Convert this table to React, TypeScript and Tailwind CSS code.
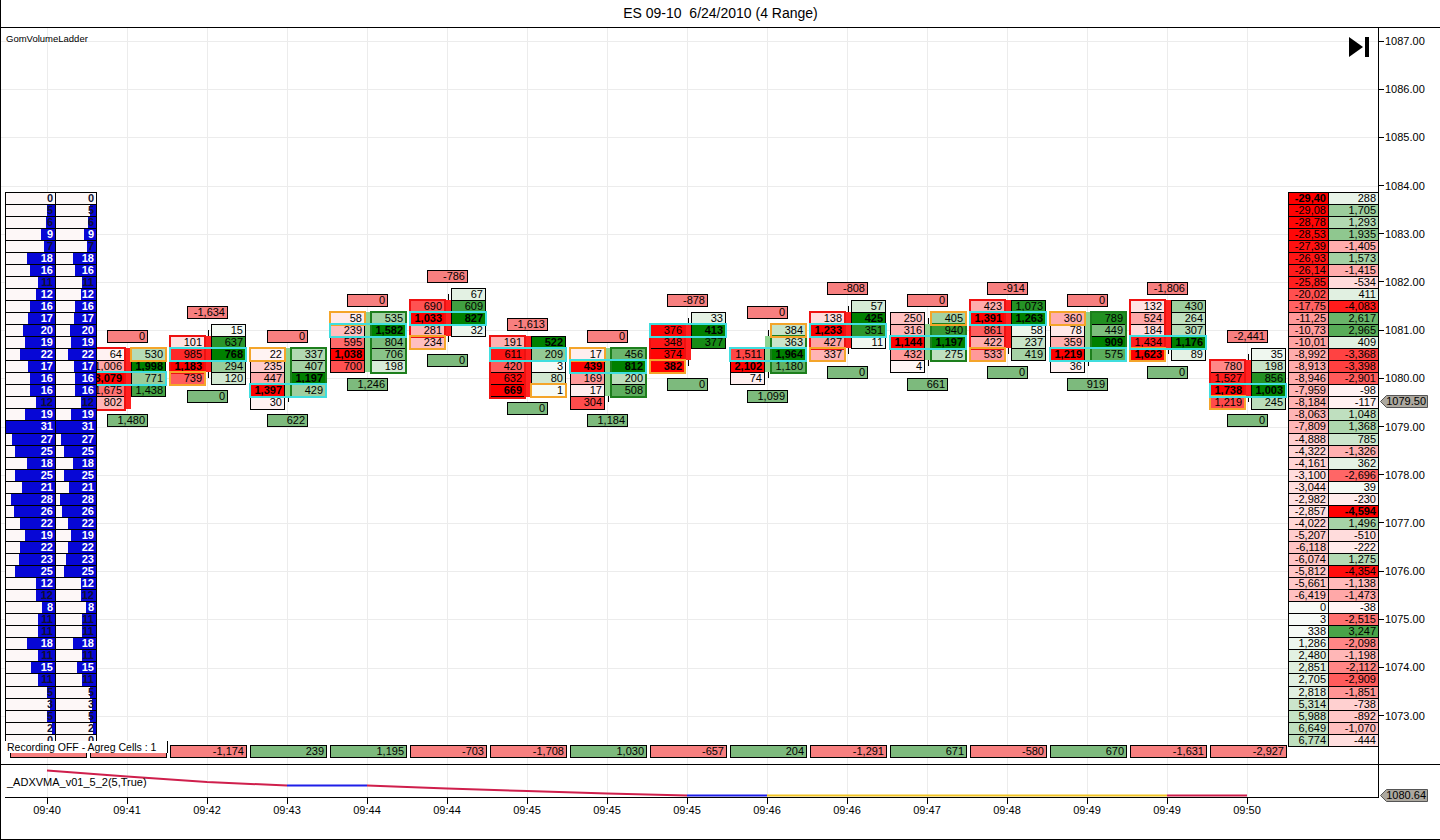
import React from 'react';

// chart geometry (page coordinates)
const TICKS = Array.from({ length: 16 }, (_, i) => 47 + i * 80);
const TIMES = ['09:40', '09:41', '09:42', '09:43', '09:44', '09:44', '09:45', '09:45', '09:45', '09:46', '09:46', '09:47', '09:48', '09:49', '09:49', '09:50'];
const PRICES = Array.from({ length: 15 }, (_, i) => 1087 - i);
const ROW = 12.05;
const TOP = 28;
const py = (p: number) => 41 + (1087 - p) * 48.2;
const ky = (k: number) => 330.2 + ROW * k; // k = 0 is 1081.00

const fmt = (n: number) => n.toLocaleString('en-US');

const heat = (v: number, max: number) => {
  const t = Math.min(1, 0.03 + (0.97 * Math.abs(v)) / max);
  const w = Math.round(255 * (1 - t));
  if (v < 0) return `rgb(255,${w},${w})`;
  return `rgb(${w},${Math.round(255 - 127 * t)},${w})`;
};

const num = (s: string) => {
  const [a, b] = s.split(',');
  if (b === undefined) return +a;
  const sign = a.startsWith('-') ? -1 : 1;
  return sign * (Math.abs(+a) * 1000 + +b.padEnd(3, '0'));
};

const LEFT = [0, 5, 6, 9, 7, 18, 16, 11, 12, 16, 17, 20, 19, 22, 17, 16, 16, 12, 19, 31, 27, 25, 18, 25, 21, 28, 26, 22, 19, 22, 23, 25, 12, 12, 8, 11, 11, 18, 11, 15, 11, 5, 3, 5, 2, 0];
const DARK = new Set([0, 1, 2, 4, 7, 17, 33, 35, 36, 38, 40, 41, 42, 43, 44, 45]);

const R1 = ['-29,40', '-29,08', '-28,78', '-28,53', '-27,39', '-26,93', '-26,14', '-25,85', '-20,02', '-17,75', '-11,25', '-10,73', '-10,01', '-8,992', '-8,913', '-8,946', '-7,959', '-8,184', '-8,063', '-7,809', '-4,888', '-4,322', '-4,161', '-3,100', '-3,044', '-2,982', '-2,857', '-4,022', '-5,207', '-6,118', '-6,074', '-5,812', '-5,661', '-6,419', '0', '3', '338', '1,286', '2,480', '2,851', '2,705', '2,818', '5,314', '5,988', '6,649', '6,774'];
const R2 = ['288', '1,705', '1,293', '1,935', '-1,405', '1,573', '-1,415', '-534', '411', '-4,083', '2,617', '2,965', '409', '-3,368', '-3,398', '-2,901', '-98', '-117', '1,048', '1,368', '785', '-1,326', '362', '-2,696', '39', '-230', '-4,594', '1,496', '-510', '-222', '1,275', '-4,354', '-1,138', '-1,473', '-38', '-2,515', '3,247', '-2,098', '-1,198', '-2,112', '-2,909', '-1,851', '-738', '-892', '-1,070', '-444'];

const DELTAS = ['', '', '-1,174', '239', '1,195', '-703', '-1,708', '1,030', '-657', '204', '-1,291', '671', '-580', '670', '-1,631', '-2,927'];

type Cl = { t: number; top: string; bot: string; bt: number; bid: number[]; at: number; ask: number[]; up: boolean; body: [number, number]; or: [number, number]; poc: number };

const CL: Cl[] = [
  { t: 127, top: '0', bot: '1,480', bt: 2, bid: [64, 1006, 3079, 1675, 802], at: 2, ask: [530, 1998, 771, 1438], up: false, body: [2, 6], or: [1, 2], poc: 4 },
  { t: 207, top: '-1,634', bot: '0', bt: 1, bid: [101, 985, 1183, 739], at: 0, ask: [15, 637, 768, 294, 120], up: false, body: [1, 3], or: [0, 4], poc: 2 },
  { t: 287, top: '0', bot: '622', bt: 2, bid: [22, 235, 447, 1397, 30], at: 2, ask: [337, 407, 1197, 429], up: true, body: [2, 5], or: [0, 2], poc: 5 },
  { t: 367, top: '0', bot: '1,246', bt: -1, bid: [58, 239, 595, 1038, 700], at: -1, ask: [535, 1582, 804, 706, 198], up: true, body: [-1, 3], or: [0, -1], poc: 0 },
  { t: 447, top: '-786', bot: '0', bt: -2, bid: [690, 1033, 281, 234], at: -3, ask: [67, 609, 827, 32], up: false, body: [-2, 0], or: [0, 1], poc: -1 },
  { t: 527, top: '-1,613', bot: '0', bt: 1, bid: [191, 611, 420, 632, 669], at: 1, ask: [522, 209, 3, 80, 1], up: false, body: [1, 5], or: [1, 5], poc: 2 },
  { t: 607, top: '0', bot: '1,184', bt: 2, bid: [17, 439, 169, 17, 304], at: 2, ask: [456, 812, 200, 508], up: true, body: [2, 5], or: [0, 2], poc: 3 },
  { t: 687, top: '-878', bot: '0', bt: 0, bid: [376, 348, 374, 382], at: -1, ask: [33, 413, 377], up: false, body: [0, 2], or: [0, 3], poc: 0 },
  { t: 767, top: '0', bot: '1,099', bt: 2, bid: [1511, 2102, 74], at: 0, ask: [384, 363, 1964, 1180], up: true, body: [1, 3], or: [1, 0], poc: 2 },
  { t: 847, top: '-808', bot: '0', bt: -1, bid: [138, 1233, 427, 337], at: -2, ask: [57, 425, 351, 11], up: false, body: [-1, 1], or: [0, 2], poc: 0 },
  { t: 927, top: '0', bot: '661', bt: -1, bid: [250, 316, 1144, 432, 4], at: -1, ask: [405, 940, 1197, 275], up: true, body: [0, 2], or: [1, -1], poc: 1 },
  { t: 1007, top: '-914', bot: '0', bt: -2, bid: [423, 1391, 861, 422, 533], at: -2, ask: [1073, 1263, 58, 237, 419], up: false, body: [-2, 1], or: [0, 2], poc: -1 },
  { t: 1087, top: '0', bot: '919', bt: -1, bid: [360, 78, 359, 1219, 36], at: -1, ask: [789, 449, 909, 575], up: true, body: [-1, 2], or: [0, -1], poc: 2 },
  { t: 1167, top: '-1,806', bot: '0', bt: -2, bid: [132, 524, 184, 1434, 1623], at: -2, ask: [430, 264, 307, 1176, 89], up: false, body: [-2, 1], or: [0, 2], poc: 1 },
  { t: 1247, top: '-2,441', bot: '0', bt: 3, bid: [780, 1527, 1738, 1219], at: 2, ask: [35, 198, 856, 1003, 245], up: false, body: [3, 5], or: [0, 6], poc: 5 },
];

function Column({ vals, bid }: { vals: number[]; bid: boolean }) {
  const max = Math.max(...vals);
  return (
    <div className="flex w-[35px] flex-col border-b border-black">
      {vals.map((v, i) => (
        <div
          key={i}
          className={`h-[12.05px] border-x border-t border-black pr-[2px] text-right text-[11px] leading-[11px] ${v === max ? 'font-bold' : ''}`}
          style={{ background: heat(bid ? -v : v, max) }}
        >
          {fmt(v)}
        </div>
      ))}
    </div>
  );
}

function Bar({ c }: { c: Cl }) {
  const kMin = Math.min(c.bt, c.at);
  const kMax = Math.max(c.bt + c.bid.length - 1, c.at + c.ask.length - 1);
  const off = (k: number) => (k - kMin) * ROW;
  const bodyH = (c.body[1] - c.body[0] + 1) * ROW;
  return (
    <>
      <div
        className="absolute h-[13px] w-[41px] border border-black bg-[#f77f7f] pr-[2px] text-right text-[11px] leading-[11px]"
        style={{ left: c.t - 21, top: ky(kMin) - 24.5 - TOP }}
      >
        {c.top}
      </div>
      <div className="absolute w-[76px]" style={{ left: c.t - 38, top: ky(kMin) - 6 - TOP }}>
        <div className="absolute left-[38px] top-[6px] w-px bg-black" style={{ height: (kMax - kMin) * ROW }} />
        <div
          className={`absolute left-[35px] w-[6px] ${c.up ? 'bg-[#8fd48f]' : 'bg-[#ff2020]'}`}
          style={{ top: off(c.body[0]), height: bodyH }}
        />
        <div className="relative flex items-start gap-[6px]">
          <div style={{ marginTop: off(c.bt) }}>
            <Column vals={c.bid} bid />
          </div>
          <div style={{ marginTop: off(c.at) }}>
            <Column vals={c.ask} bid={false} />
          </div>
        </div>
        <div
          className={`absolute w-[37px] border-2 ${c.up ? 'left-[40px] border-[#1d7f1d]' : '-left-px border-[#ee1111]'}`}
          style={{ top: off(c.body[0]) - 1, height: bodyH + 3 }}
        />
        <div
          className={`absolute h-[15px] w-[37px] border-2 border-[#f4a52a] ${c.or[0] ? 'left-[40px]' : '-left-px'}`}
          style={{ top: off(c.or[1]) - 1 }}
        />
        <div className="absolute -left-px h-[15px] w-[78px] border-2 border-[#3fdede]" style={{ top: off(c.poc) - 1 }} />
      </div>
      <div
        className="absolute h-[13px] w-[41px] border border-black bg-[#7dba7d] pr-[2px] text-right text-[11px] leading-[11px]"
        style={{ left: c.t - 21, top: ky(kMax) + 11.5 - TOP }}
      >
        {c.bot}
      </div>
    </>
  );
}

function LeftLadder() {
  return (
    <div className="absolute left-[4px] top-[163.6px] flex flex-col border-b border-black">
      {LEFT.map((v, i) => (
        <div key={i} className="flex h-[12.05px] border-r border-black">
          {[50, 41].map((w, j) => (
            <div key={j} className={`relative h-full border-l border-t border-black bg-[#fdf7f7] ${j ? 'w-[41px]' : 'w-[50px]'}`}>
              <div className="absolute bottom-0 right-0 top-0 bg-[#0707d6]" style={{ width: `${(v / 31) * 100}%` }} />
              <div className={`relative pr-[2px] text-right text-[11px] font-bold leading-[11px] ${DARK.has(i) ? 'text-[#101030]' : 'text-white'}`}>
                {v}
              </div>
            </div>
          ))}
        </div>
      ))}
    </div>
  );
}

function RightLadder() {
  return (
    <div className="absolute left-[1287px] top-[163.6px] flex flex-col border-b border-black">
      {R1.map((a, i) => {
        const b = R2[i];
        return (
          <div key={i} className="flex h-[12.05px] border-r border-black text-[11px] leading-[11px]">
            <div className={`h-full w-[40px] border-l border-t border-black pr-[2px] text-right ${i === 0 ? 'font-bold' : ''}`} style={{ background: heat(num(a), 29400) }}>
              {a}
            </div>
            <div className={`h-full w-[50px] border-l border-t border-black pr-[2px] text-right ${i === 26 ? 'font-bold' : ''}`} style={{ background: heat(num(b), 4594) }}>
              {b}
            </div>
          </div>
        );
      })}
    </div>
  );
}

function Flag({ label, className }: { label: string; className: string }) {
  return (
    <div className={`absolute left-[1px] z-10 h-[13px] w-[48px] ${className}`}>
      <svg className="absolute inset-0" width="48" height="13" viewBox="0 0 48 13">
        <polygon points="0.5,6.5 6.5,0.5 47.5,0.5 47.5,12.5 6.5,12.5" fill="#aca89f" stroke="#555" />
      </svg>
      <span className="relative block pr-[2px] text-right text-[11px] leading-[13px]">{label}</span>
    </div>
  );
}

export default function App() {
  return (
    <div className="flex h-[840px] w-[1440px] flex-col border-b border-l border-black bg-white font-['Liberation_Sans',Arial,sans-serif] text-black">
      <div className="flex h-[28px] shrink-0 items-center justify-center border-b border-black text-[14px]">
        {'ES 09-10\u00a0 6/24/2010 (4 Range)'}
      </div>

      <div className="flex h-[736px] shrink-0">
        <div className="relative h-full w-[1378px] shrink-0 border-r border-black">
          <svg className="absolute left-0 top-0" width="1377" height="736" shapeRendering="crispEdges">
            {PRICES.map((p) => (
              <line key={p} x1="0" x2="1377" y1={Math.round(py(p) - TOP) + 0.5} y2={Math.round(py(p) - TOP) + 0.5} stroke="#ececec" />
            ))}
            {TICKS.map((t) => (
              <line key={t} x1={t - 0.5} x2={t - 0.5} y1="0" y2="736" stroke="#ececec" />
            ))}
          </svg>

          <div className="absolute left-[5px] top-[5px] text-[9.5px] leading-[12px]">GomVolumeLadder</div>
          <svg className="absolute left-[1348px] top-[9px]" width="21" height="20" viewBox="0 0 21 20">
            <polygon points="0,0 14,10 0,20" fill="#000" />
            <rect x="16" y="0" width="4" height="20" fill="#000" />
          </svg>

          {CL.map((c) => (
            <Bar key={c.t} c={c} />
          ))}

          <LeftLadder />
          <RightLadder />

          <div className="absolute left-[9px] top-[717px] flex gap-[3px]">
            {DELTAS.map((d, i) => (
              <div
                key={i}
                className={`h-[13px] w-[77px] border border-black pr-[2px] text-right text-[11px] leading-[11px] ${d.startsWith('-') || d === '' ? 'bg-[#f77f7f]' : 'bg-[#7dba7d]'}`}
              >
                {d}
              </div>
            ))}
          </div>
          <div className="absolute left-[4px] top-[713px] z-10 h-[12px] w-[163px] border-r border-black bg-white pl-[2px] text-[10.5px] leading-[12px]">
            Recording OFF - Agreg Cells : 1
          </div>
        </div>

        <div className="relative flex h-full flex-1 flex-col pt-[13px]">
          {PRICES.map((p) => (
            <div key={p} className="h-[48.2px] shrink-0">
              <div className="-mt-[7px] flex h-[14px] items-center gap-[1px]">
                <div className="h-px w-[5px] bg-black" />
                <span className="text-[11px] leading-[14px]">{p.toFixed(2)}</span>
              </div>
            </div>
          ))}
          <Flag label="1079.50" className="top-[367px]" />
        </div>
      </div>

      <div className="flex h-[33px] shrink-0 border-t border-black">
        <div className="relative h-full w-[1378px] shrink-0 border-r border-black">
          <svg className="absolute left-0 top-0" width="1377" height="32">
            {TICKS.map((t) => (
              <line key={t} x1={t - 0.5} x2={t - 0.5} y1="0" y2="32" stroke="#ececec" shapeRendering="crispEdges" />
            ))}
            <polyline points="46,5.5 126,11.5 206,17 286,20.5" fill="none" stroke="#cf1f4c" strokeWidth="2" />
            <polyline points="286,20.5 366,20.5" fill="none" stroke="#1f1fe8" strokeWidth="2" />
            <polyline points="366,20.5 446,23.5 526,26 606,28.5 686,30.5" fill="none" stroke="#cf1f4c" strokeWidth="2" />
            <polyline points="686,30.5 766,30.5" fill="none" stroke="#1f1fe8" strokeWidth="2" />
            <polyline points="766,30.5 1166,30.5" fill="none" stroke="#f2c526" strokeWidth="2" />
            <polyline points="1166,30.5 1246,30.5" fill="none" stroke="#cf1f4c" strokeWidth="2" />
          </svg>
          <div className="relative pl-[6px] pt-[11px] text-[11px] leading-[13px]">_ADXVMA_v01_5_2(5,True)</div>
        </div>
        <div className="relative flex-1">
          <Flag label="1080.64" className="top-[24px]" />
        </div>
      </div>

      <div className="h-[42px] shrink-0 pl-[4px]">
        <div className="flex h-full w-[1374px] border-t border-black pl-[2px]">
          {TIMES.map((t, i) => (
            <div key={i} className="flex w-[80px] shrink-0 flex-col items-center">
              <div className="h-[6px] w-px bg-black" />
              <span className="text-[11px] leading-[13px]">{t}</span>
            </div>
          ))}
        </div>
      </div>
    </div>
  );
}
